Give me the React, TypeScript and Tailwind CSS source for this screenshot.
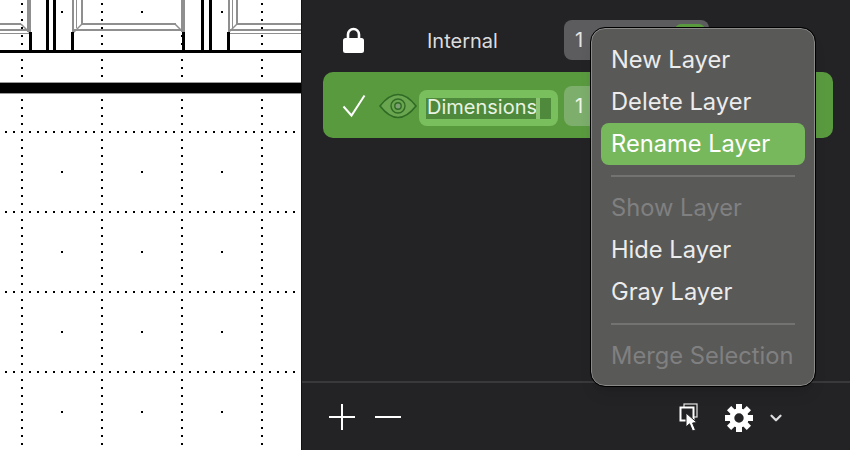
import { ChevronDown } from 'lucide-react';

const gridX = [22, 102, 182, 262];
const gridY = [132, 212, 292, 372];
const centerX = [62, 142, 222];
const centerY = [12, 172, 252, 332, 412];

function Canvas() {
  const vertical: number[] = [];
  for (let y = 4; y < 450; y += 8) {
    if (y !== 52 && y !== 84 && y !== 92) vertical.push(y);
  }
  const horizontal: number[] = [];
  for (let x = 6; x < 300; x += 8) horizontal.push(x);

  return (
    <svg width="301" height="450" viewBox="0 0 301 450" shapeRendering="crispEdges" className="block">
      <rect width="301" height="450" fill="#ffffff" />
      {/* wall grid */}
      {gridX.map((x) =>
        vertical.map((y) => <rect key={`v${x}-${y}`} x={x - 1} y={y - 1} width="2" height="2" fill="#000" />)
      )}
      {gridY.map((y) =>
        horizontal.map((x) => <rect key={`h${x}-${y}`} x={x - 1} y={y - 1} width="2" height="2" fill="#000" />)
      )}
      {centerX.map((x) =>
        centerY.map((y) => <rect key={`c${x}-${y}`} x={x - 1} y={y - 1} width="2" height="2" fill="#000" />)
      )}
      {/* window bevels */}
      <g fill="#8f8f8f">
        <rect x="0" y="23" width="21" height="2" />
        <rect x="0" y="29" width="30" height="2" />
        <rect x="0" y="33" width="30" height="1" />
        <rect x="82" y="23" width="94" height="2" />
        <rect x="74" y="29" width="110" height="2" />
        <rect x="236" y="23" width="65" height="2" />
        <rect x="230" y="29" width="71" height="2" />
        <rect x="230" y="33" width="71" height="1" />
        <rect x="27" y="0" width="4" height="32" />
        <rect x="72" y="0" width="2" height="32" />
        <rect x="76" y="0" width="1" height="28" />
        <rect x="81" y="0" width="2" height="24" />
        <rect x="181" y="0" width="4" height="32" />
        <rect x="228" y="0" width="2" height="32" />
        <rect x="232" y="0" width="1" height="28" />
        <rect x="236" y="0" width="2" height="24" />
      </g>
      <g stroke="#8f8f8f" strokeWidth="1.5" shapeRendering="auto">
        <line x1="21" y1="24" x2="30" y2="33" />
        <line x1="82" y1="24" x2="73" y2="33" />
        <line x1="175" y1="24" x2="184" y2="33" />
        <line x1="237" y1="24" x2="228" y2="33" />
      </g>
      {/* wall lines */}
      <g fill="#000">
        <rect x="0" y="50" width="301" height="3" />
        <rect x="29" y="32" width="3" height="20" />
        <rect x="71" y="32" width="3" height="20" />
        <rect x="182" y="32" width="3" height="20" />
        <rect x="227" y="32" width="3" height="20" />
        <rect x="46" y="0" width="3" height="52" />
        <rect x="53" y="0" width="3" height="52" />
        <rect x="201" y="0" width="3" height="52" />
        <rect x="209" y="0" width="3" height="52" />
        <rect x="0" y="83" width="301" height="10" />
      </g>
      <rect x="0" y="82" width="301" height="1" fill="#9a9a9a" />
      <rect x="0" y="93" width="301" height="1" fill="#9a9a9a" />
    </svg>
  );
}

function LockIcon() {
  return (
    <svg width="21" height="26" viewBox="0 0 21 26" className="shrink-0">
      <path d="M5 12 V7.5 a5.5 5.5 0 0 1 11 0 V12" fill="none" stroke="#ffffff" strokeWidth="2.6" />
      <rect x="0" y="11" width="21" height="15" rx="2.5" fill="#ffffff" />
    </svg>
  );
}

function CheckIcon() {
  return (
    <svg width="24" height="24" viewBox="0 0 24 24" className="shrink-0">
      <path d="M1.5 12.5 L9.5 21.5 L22.5 1.5" fill="none" stroke="#ffffff" strokeWidth="2" />
    </svg>
  );
}

function EyeIcon() {
  return (
    <svg width="38" height="26" viewBox="0 0 38 26" className="shrink-0">
      <path d="M1 13 C8 4 14 1.5 19 1.5 C24 1.5 30 4 37 13 C30 22 24 24.5 19 24.5 C14 24.5 8 22 1 13 Z" fill="#6aa550" stroke="#2f6b24" strokeWidth="1.6" />
      <circle cx="19" cy="13" r="7" fill="none" stroke="#2f6b24" strokeWidth="1.4" />
      <circle cx="19" cy="13" r="3.2" fill="#7d9f73" stroke="#2f6b24" strokeWidth="1.4" />
    </svg>
  );
}

function SelectIcon() {
  return (
    <svg width="20" height="30" viewBox="0 0 20 30" className="shrink-0">
      <rect x="5" y="1" width="13" height="13" fill="none" stroke="#e6e6e6" strokeWidth="1.2" />
      <rect x="1.5" y="4.5" width="13" height="13" fill="#232225" stroke="#ffffff" strokeWidth="2" />
      <path d="M7 10 L7 24 L10.5 20.8 L13.5 28 L16.5 27 L13.6 20 L18 19.6 Z" fill="#ffffff" stroke="#232225" strokeWidth="1" />
    </svg>
  );
}

function GearIcon() {
  return (
    <svg width="28" height="28" viewBox="0 0 28 28" className="shrink-0">
      {[0, 45, 90, 135, 180, 225, 270, 315].map((a) => (
        <rect key={a} x="11" y="0" width="6" height="7" fill="#ffffff" transform={`rotate(${a} 14 14)`} />
      ))}
      <circle cx="14" cy="14" r="7.2" fill="none" stroke="#ffffff" strokeWidth="5" />
    </svg>
  );
}

const itemClass = 'h-[42px] flex items-center px-[10px] text-[23.7px] leading-none whitespace-nowrap';

function LayerMenu() {
  return (
    <div className="absolute left-[591px] top-[28px] w-[224px] h-[358px] rounded-[14px] bg-[#595958] border border-[#8a8a89] outline outline-1 outline-black pt-[10px] px-[9px] shadow-lg">
      <div className={`${itemClass} text-[#ececec]`}>New Layer</div>
      <div className={`${itemClass} text-[#ececec]`}>Delete Layer</div>
      <div className={`${itemClass} text-white bg-[#78b85c] rounded-lg`}>Rename Layer</div>
      <div className="h-[22px] flex items-center px-2.5">
        <div className="h-[2px] w-full bg-[#737372]" />
      </div>
      <div className={`${itemClass} text-[#808080]`}>Show Layer</div>
      <div className={`${itemClass} text-[#ececec]`}>Hide Layer</div>
      <div className={`${itemClass} text-[#ececec]`}>Gray Layer</div>
      <div className="h-[22px] flex items-center px-2.5">
        <div className="h-[2px] w-full bg-[#737372]" />
      </div>
      <div className={`${itemClass} text-[#808080]`}>Merge Selection</div>
    </div>
  );
}

export default function App() {
  return (
    <div className="relative w-[850px] h-[450px] flex overflow-hidden bg-[#232225] font-['Inter',sans-serif]">
      <Canvas />

      <div className="flex-1 flex flex-col border-l border-[#111113]">
        <div className="flex-1 flex flex-col">
          {/* Internal layer */}
          <div className="mt-5 h-10 flex items-center">
            <div className="ml-[41px] w-[84px] flex">
              <LockIcon />
            </div>
            <span className="pt-[2px] text-[20px] text-[#dcdcdd] w-[137px]">Internal</span>
            <div className="relative w-[145px] h-10 rounded-lg bg-[#5c5b5e] flex items-center pl-[11px] text-[20px] text-[#e4e4e4] overflow-hidden">
              1
              <div className="absolute left-[111px] top-1 w-[30px] h-8 rounded-md bg-[#5a9a3f]" />
            </div>
          </div>

          {/* Dimensions layer */}
          <div className="mt-3 ml-[21px] w-[510px] h-[66px] rounded-[10px] bg-[#5a9a3f] flex items-center">
            <div className="ml-[19px] mt-[2px]">
              <CheckIcon />
            </div>
            <div className="ml-[13px] mt-[2px]">
              <EyeIcon />
            </div>
            <div className="ml-[2px] mt-[6px] w-[139px] h-9 rounded-lg bg-[#7abf5e] flex items-center pl-[7px] pr-[7px]">
              <div className="flex-1 h-[21px] bg-[#4f8a3c] flex items-center">
                <span className="pl-px pb-[2px] text-[20px] leading-none text-[#e8f3e2] w-[110px]">Dimensions</span>
                <div className="w-1 h-full bg-[#8cc473]" />
              </div>
            </div>
            <div className="ml-[6px] mt-[2px] w-[120px] h-10 rounded-lg bg-[#7dae6c] flex items-center pl-[11px] text-[20px] text-[#eef5ea]">
              1
            </div>
          </div>
        </div>

        {/* Footer */}
        <div className="h-[69px] border-t-2 border-[#39383b] flex items-center text-white">
          <div className="ml-[27px] relative w-[26px] h-[26px] flex items-center justify-center">
            <div className="w-[26px] h-[2px] bg-white" />
            <div className="absolute w-[2px] h-[26px] bg-white" />
          </div>
          <div className="ml-5 w-[26px] h-[2px] bg-white" />
          <div className="ml-[278px] mt-[2px]">
            <SelectIcon />
          </div>
          <div className="ml-[26px] mt-[2px]">
            <GearIcon />
          </div>
          <ChevronDown className="ml-[14px] mt-[3px] w-[18px] h-[18px] text-[#dddddd]" strokeWidth={3} />
        </div>
      </div>

      <LayerMenu />
    </div>
  );
}
